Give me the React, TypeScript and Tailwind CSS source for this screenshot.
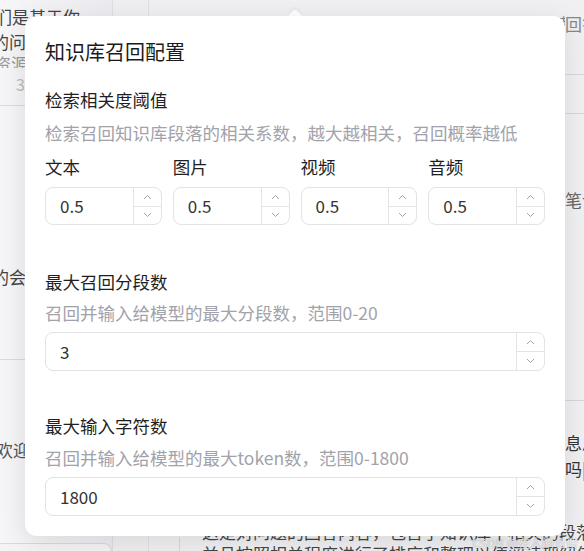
import React from "react"

const font = { fontFamily: '"Noto Sans CJK SC", "Noto Sans", sans-serif' }

function Chevron({ up }: { up?: boolean }) {
  return (
    <svg width="9" height="6" viewBox="0 0 9 6" fill="none">
      <path
        d={up ? "M1 5 L4.5 1.5 L8 5" : "M1 1 L4.5 4.5 L8 1"}
        stroke="#a3a3a8"
        strokeWidth="1"
      />
    </svg>
  )
}

function NumberInput({ value, h = "h-[38px]" }: { value: string; h?: string }) {
  return (
    <div className={`flex ${h} rounded-[8px] border border-[#e2e2e7] bg-white`}>
      <div className="flex flex-1 items-center pl-[14px] text-[17px] text-[#333]">{value}</div>
      <div className="flex w-[28px] flex-col border-l border-[#e2e2e7]">
        <div className="flex flex-1 items-center justify-center border-b border-[#e2e2e7]">
          <Chevron up />
        </div>
        <div className="flex flex-1 items-center justify-center">
          <Chevron />
        </div>
      </div>
    </div>
  )
}

export default function App() {
  const channels = ["文本", "图片", "视频", "音频"]

  return (
    <div style={font} className="relative h-[551px] w-[584px] overflow-hidden bg-[#f0f0f3]">
      {/* background page */}
      <div className="flex h-full">
        {/* left list */}
        <div className="flex w-[113px] flex-col overflow-hidden border-r border-[#dedee3] bg-gradient-to-r from-[#f6f6f8] to-[#ececf0] text-[17px] text-[#444]">
          <div className="h-[106px] shrink-0 border-b border-[#dadade]">
            <div className="ml-[-5px] mt-[4px] whitespace-nowrap leading-[26px]">们是基于你</div>
            <div className="ml-[-8px] whitespace-nowrap leading-[24px]">的问题</div>
            <div className="ml-[-6px] h-[14px] overflow-hidden whitespace-nowrap leading-[20px] text-[#999]">资源</div>
            <div className="ml-[16px] mt-[6px] text-[16px] leading-[20px] text-[#bbb]">3</div>
          </div>
          <div className="h-[254px] shrink-0 border-b border-[#dadade]">
            <div className="ml-[-8px] mt-[159px] whitespace-nowrap leading-[24px]">的会</div>
          </div>
          <div className="h-[183px] shrink-0">
            <div className="ml-[-4px] mt-[78px] whitespace-nowrap leading-[24px] text-[#555]">欢迎</div>
          </div>
          <div className="flex-1 rounded-tr-[8px] border-t border-r border-[#d8d8dd] bg-[#f4f4f6]" />
        </div>

        {/* middle strip */}
        <div className="w-[36px] border-r border-[#dedee3] bg-[#efeff2]" />

        {/* main area */}
        <div className="relative min-w-0 flex-1 overflow-hidden text-[17px] text-[#333]">
          <div className="mt-[12px] flex whitespace-nowrap leading-[24px] text-[#888]">
            <span className="ml-[30px] min-w-0 flex-1 overflow-hidden">这是一个基于知识库的智能问答助手，可以帮你快速检索</span>
            <span className="w-[19px] shrink-0 overflow-hidden">回答</span>
          </div>
          <div className="h-[38px]" />
          <div className="ml-auto w-[40px] border-b border-[#d6d6dc]" />
          <div className="h-[38px]" />
          <div className="ml-auto w-[40px] border-b border-[#d6d6dc]" />
          <div className="ml-auto mt-[74px] w-[19px] overflow-hidden whitespace-nowrap leading-[24px] text-[#666]">笔记</div>
          <div className="ml-auto mt-[188px] w-[40px] border-b border-[#d6d6dc]" />
          <div className="ml-auto mt-[30px] w-[19px] overflow-hidden whitespace-nowrap leading-[24px]">息息</div>
          <div className="ml-auto mt-[2px] w-[19px] overflow-hidden whitespace-nowrap leading-[24px]">吗|</div>
          <div className="ml-[53px] mt-[40px] whitespace-nowrap leading-[22px] text-[#444]">
            这是对问题的回答内容，包含了知识库中相关的段落的
          </div>
          <div className="ml-[53px] whitespace-nowrap leading-[22px] text-[#444]">
            并且按照相关程度进行了排序和整理以便阅读理解使用
          </div>
          <div className="absolute bottom-[-6px] left-[30px] h-[20px] border-l border-[#d8d8dd]" />
          <div className="absolute bottom-[1px] right-[6px] text-[12px] leading-[14px] text-white/85 [text-shadow:0_0_1px_rgba(0,0,0,0.4)]">
            CSDN @在人间负债
          </div>
        </div>
      </div>

      {/* popover arrow */}
      <div className="absolute left-[290px] top-[11px] h-[10px] w-[10px] rotate-45 rounded-[2px] bg-white shadow-[-2px_-2px_4px_rgba(0,0,0,0.04)]" />

      {/* popover */}
      <div className="absolute left-[25px] top-[16px] w-[540px] rounded-[12px] bg-white px-[20px] pb-[20px] pt-[22px] shadow-[0_6px_28px_rgba(0,0,0,0.10)]">
        <div className="text-[20px] leading-[28px] text-[#1a1a1a]">知识库召回配置</div>

        <div className="mt-[22px] text-[17.5px] leading-[24px] text-[#1f1f1f]">检索相关度阈值</div>
        <div className="mt-[8px] text-[17.5px] leading-[26px] text-[#a2a2aa]">
          检索召回知识库段落的相关系数，越大越相关，召回概率越低
        </div>
        <div className="mt-[9px] grid grid-cols-4 gap-x-[11px]">
          {channels.map((c) => (
            <div key={c}>
              <div className="text-[17.5px] leading-[24px] text-[#1f1f1f]">{c}</div>
              <div className="mt-[8px]">
                <NumberInput value="0.5" />
              </div>
            </div>
          ))}
        </div>

        <div className="mt-[45px] text-[17.5px] leading-[24px] text-[#1f1f1f]">最大召回分段数</div>
        <div className="mt-[6px] text-[17.5px] leading-[26px] text-[#a2a2aa]">召回并输入给模型的最大分段数，范围0-20</div>
        <div className="mt-[6px]">
          <NumberInput value="3" h="h-[39px]" />
        </div>

        <div className="mt-[43px] text-[17.5px] leading-[24px] text-[#1f1f1f]">最大输入字符数</div>
        <div className="mt-[7px] text-[17.5px] leading-[26px] text-[#a2a2aa]">召回并输入给模型的最大token数，范围0-1800</div>
        <div className="mt-[6px]">
          <NumberInput value="1800" h="h-[39px]" />
        </div>
      </div>
    </div>
  )
}
